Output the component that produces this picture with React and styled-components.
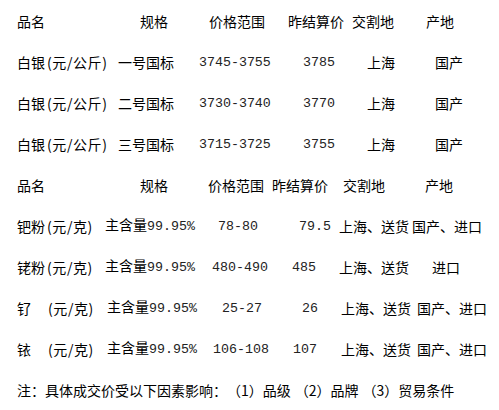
import React from 'react';
import styled, { createGlobalStyle } from 'styled-components';

const GlobalStyle = createGlobalStyle`
  body {
    margin: 0;
    background: #fff;
    color: #000;
    font-family: "Noto Sans CJK SC", sans-serif;
    font-size: 14px;
    text-spacing-trim: space-all;
  }
`;

const Page = styled.div`
  width: 499px;
  height: 410px;
  padding-left: 17px;
  box-sizing: border-box;
  overflow: hidden;
`;

const Table = styled.div`
  display: grid;
  grid-template-columns: ${(p) => p.$cols};
  grid-auto-rows: 41px;
  align-items: center;
`;

const Cell = styled.div`
  padding-left: ${(p) => p.$indent || 0}px;
  white-space: nowrap;
  line-height: 16px;
`;

const Num = styled.span`
  font-family: "Liberation Mono", monospace;
  font-size: 13.3px;
  color: #222;
`;

const Unit = styled.span`
  margin-left: ${(p) => p.$gap}px;
  letter-spacing: 0.6px;
`;

const Note = styled.div`
  height: 41px;
  display: flex;
  align-items: center;
  white-space: nowrap;
  line-height: 16px;
`;

const Gap = styled.span`
  display: inline-block;
  width: 4px;
`;

const silverHeader = [
  ['品名', 0], ['规格', 22], ['价格范围', 10], ['昨结算价', 0], ['交割地', 0], ['产地', 0],
];

const silverRows = [
  { spec: '一号国标', range: '3745-3755', last: '3785' },
  { spec: '二号国标', range: '3730-3740', last: '3770' },
  { spec: '三号国标', range: '3715-3725', last: '3755' },
];

const metalHeader = [
  ['品名', 0], ['规格', 35], ['价格范围', 0], ['昨结算价', 0], ['交割地', 4], ['产地', 13],
];

const metalRows = [
  { name: '钯粉', gap: 2, spec: 0, range: '78-80', rIn: 10, last: '79.5', lIn: 27, place: 0, origin: '国产、进口', oIn: 0 },
  { name: '铑粉', gap: 2, spec: 0, range: '480-490', rIn: 4, last: '485', lIn: 20, place: 0, origin: '进口', oIn: 20 },
  { name: '钌', gap: 17, spec: 2, range: '25-27', rIn: 14, last: '26', lIn: 30, place: 2, origin: '国产、进口', oIn: 5 },
  { name: '铱', gap: 17, spec: 2, range: '106-108', rIn: 5, last: '107', lIn: 21, place: 2, origin: '国产、进口', oIn: 5 },
];

const App = () => (
  <>
    <GlobalStyle />
    <Page>
      <Table $cols="101px 81px 89px 64px 74px 1fr">
        {silverHeader.map(([t, i]) => (
          <Cell key={t} $indent={i}>{t}</Cell>
        ))}
        {silverRows.map((r) => (
          <React.Fragment key={r.spec}>
            <Cell>白银<Unit $gap={2}>(元/公斤)</Unit></Cell>
            <Cell>{r.spec}</Cell>
            <Cell><Num>{r.range}</Num></Cell>
            <Cell $indent={15}><Num>{r.last}</Num></Cell>
            <Cell $indent={15}>上海</Cell>
            <Cell $indent={9}>国产</Cell>
          </React.Fragment>
        ))}
      </Table>
      <Table $cols="88px 103px 64px 67px 73px 1fr">
        {metalHeader.map(([t, i]) => (
          <Cell key={t} $indent={i}>{t}</Cell>
        ))}
        {metalRows.map((r) => (
          <React.Fragment key={r.name}>
            <Cell>{r.name}<Unit $gap={r.gap}>(元/克)</Unit></Cell>
            <Cell $indent={r.spec}>主含量<Num>99.95%</Num></Cell>
            <Cell $indent={r.rIn}><Num>{r.range}</Num></Cell>
            <Cell $indent={r.lIn}><Num>{r.last}</Num></Cell>
            <Cell $indent={r.place}>上海、送货</Cell>
            <Cell $indent={r.oIn}>{r.origin}</Cell>
          </React.Fragment>
        ))}
      </Table>
      <Note>
        注：具体成交价受以下因素影响：（1）品级<Gap />（2）品牌<Gap />（3）贸易条件
      </Note>
    </Page>
  </>
);

export default App;
